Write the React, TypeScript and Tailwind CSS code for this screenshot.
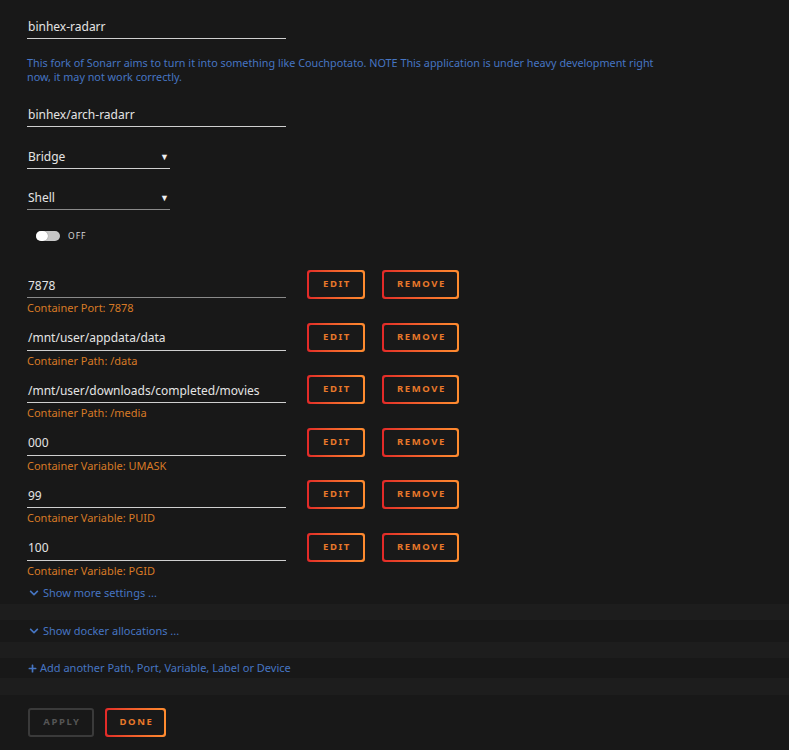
import { FaChevronDown, FaPlus } from 'react-icons/fa'

const mappings = [
  { host: '7878', label: 'Container Port: 7878', dim: true },
  { host: '/mnt/user/appdata/data', label: 'Container Path: /data' },
  { host: '/mnt/user/downloads/completed/movies', label: 'Container Path: /media' },
  { host: '000', label: 'Container Variable: UMASK' },
  { host: '99', label: 'Container Variable: PUID' },
  { host: '100', label: 'Container Variable: PGID' },
]

function GradientButton({ children, width }: { readonly children: React.ReactNode; readonly width: string }) {
  return (
    <div className={`${width} h-[29px] rounded-[3px] bg-gradient-to-r from-[#e22828] to-[#ff8c2f] p-[2px]`}>
      <div className="flex h-full w-full items-center justify-center rounded-[2px] bg-[#191919] pl-[2px] text-[9.5px] font-bold tracking-[1.6px] text-[#e8782a]">
        {children}
      </div>
    </div>
  )
}

function Field({ value, width = 'w-[259px]', dim, className = '' }: { readonly value: string; readonly width?: string; readonly dim?: boolean; readonly className?: string }) {
  return (
    <div
      className={`${width} ${className} flex h-[27px] items-center border-b ${dim ? 'border-[#8a8a8a]' : 'border-[#cfcfcf]'} pl-px pt-[3px] text-[12px] text-[#e4e4e4]`}
    >
      {value}
    </div>
  )
}

function Select({ value, dim, className = '' }: { readonly value: string; readonly dim?: boolean; readonly className?: string }) {
  return (
    <div
      className={`${className} flex h-[25px] w-[143px] items-center justify-between border-b ${dim ? 'border-[#8a8a8a]' : 'border-[#cfcfcf]'} pl-px pr-[1px] pt-[2px] text-[12px] text-[#e4e4e4]`}
    >
      <span>{value}</span>
      <span className="text-[9px] text-[#eeeeee]">▼</span>
    </div>
  )
}

export default function App() {
  return (
    <div className="min-h-[750px] w-[789px] bg-[#181818] font-['Noto_Sans',sans-serif]">
      <div className="h-[604px] pl-[27px] pt-[12px]">
        <Field value="binhex-radarr" />

        <p className="mt-[17px] w-[640px] text-[10.8px] leading-[14px] text-[#4675c2]">
          This fork of Sonarr aims to turn it into something like Couchpotato. NOTE This application is under heavy development right now, it may not work correctly.
        </p>

        <Field value="binhex/arch-radarr" className="mt-[16px]" />

        <Select value="Bridge" className="mt-[17px]" />
        <Select value="Shell" dim className="mt-[16px]" />

        <div className="mt-[13px] flex h-[26px] items-center gap-[8px] pl-[9px]">
          <div className="flex h-[10px] w-[24px] items-center rounded-full bg-[#c8c8c8]">
            <div className="h-[10px] w-[12px] rounded-full bg-white shadow-[0_0_1px_rgba(0,0,0,0.5)]" />
          </div>
          <span className="text-[8.5px] tracking-[1px] text-[#d8d8d8]">OFF</span>
        </div>

        <div className="mt-[21px]">
          {mappings.map((m) => (
            <div key={m.host} className="flex h-[52.5px] items-start">
              <div className="w-[259px] pt-px">
                <Field value={m.host} dim={m.dim} />
                <div className="mt-[3px] text-[11px] leading-[14px] text-[#d77a26]">{m.label}</div>
              </div>
              <div className="ml-[21px]">
                <GradientButton width="w-[58px]">EDIT</GradientButton>
              </div>
              <div className="ml-[17px]">
                <GradientButton width="w-[77px]">REMOVE</GradientButton>
              </div>
            </div>
          ))}
        </div>

        <div className="flex h-[16px] items-center gap-[4px] pl-[2px] text-[11px] text-[#4675c2]">
          <FaChevronDown className="h-[10px] w-[10px]" />
          <span>Show more settings ...</span>
        </div>
      </div>

      <div className="h-[16px] bg-[#1d1d1d]" />

      <div className="flex h-[22px] items-center gap-[4px] pl-[29px] text-[11px] text-[#4675c2]">
        <FaChevronDown className="h-[10px] w-[10px]" />
        <span>Show docker allocations ...</span>
      </div>

      <div className="h-[16px] bg-[#1d1d1d]" />

      <div className="flex h-[20px] items-center gap-[3px] pl-[28px] text-[11px] text-[#4675c2]">
        <FaPlus className="h-[9px] w-[9px]" />
        <span>Add another Path, Port, Variable, Label or Device</span>
      </div>

      <div className="h-[17px] bg-[#1d1d1d]" />

      <div className="flex gap-[11px] pl-[28px] pt-[13px]">
        <div className="flex h-[29px] w-[66px] items-center justify-center rounded-[3px] border-2 border-[#3a3a3a] pl-[2px] text-[9.5px] font-bold tracking-[1.6px] text-[#555555]">
          APPLY
        </div>
        <GradientButton width="w-[61px]">DONE</GradientButton>
      </div>
    </div>
  )
}
